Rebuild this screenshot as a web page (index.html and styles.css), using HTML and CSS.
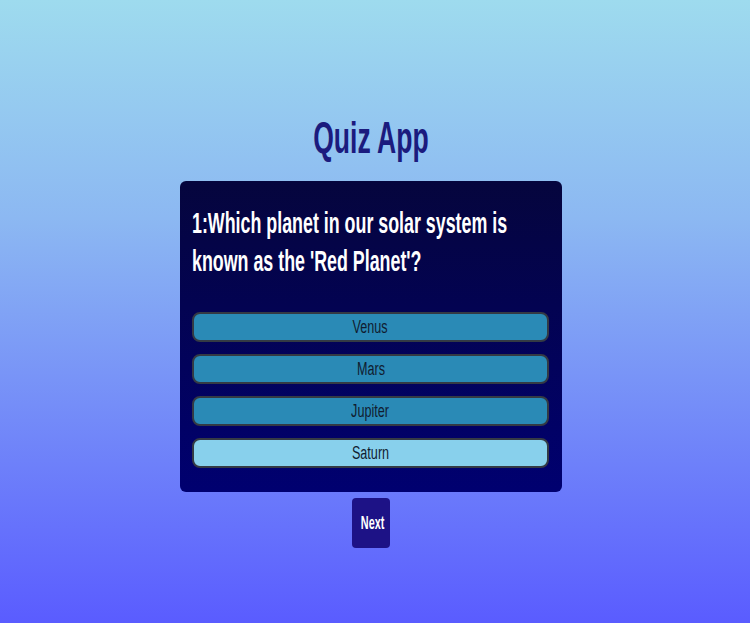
FILE: index.html
```html
<!DOCTYPE html>
<html>
<head>
<meta charset="utf-8">
<link rel="stylesheet" href="styles.css">
</head>
<body>
<main class="app">
  <h1 class="title"><span class="squeeze">Quiz App</span></h1>
  <section class="card">
    <div class="question-wrap">
      <h2 class="question">1:Which planet in our solar system is known as the 'Red Planet'?</h2>
    </div>
    <div class="answers">
      <button class="answer"><span class="squeeze">Venus</span></button>
      <button class="answer"><span class="squeeze">Mars</span></button>
      <button class="answer"><span class="squeeze">Jupiter</span></button>
      <button class="answer selected"><span class="squeeze">Saturn</span></button>
    </div>
  </section>
  <button class="next"><span class="squeeze">Next</span></button>
</main>
</body>
</html>
```
FILE: styles.css
```css
html, body {
  margin: 0;
  height: 100%;
}
body {
  background: linear-gradient(to bottom, #9edbee 0%, #8cb8f2 35%, #5a5cff 100%);
  font-family: "Liberation Sans", Arial, sans-serif;
}
.app {
  display: flex;
  flex-direction: column;
  align-items: center;
  padding-top: 110px;
  padding-right: 8px;
}
.squeeze {
  display: inline-block;
  transform-origin: center center;
}
.title {
  margin: 0;
  font-size: 45px;
  line-height: 56px;
  color: #1b1b7e;
  font-weight: bold;
}
.title .squeeze {
  transform: scaleX(0.59);
}
.card {
  margin-top: 15px;
  width: 357px;
  padding: 23px 13px 24px 12px;
  border-radius: 6px;
  background: linear-gradient(to bottom, #05053d 0%, #000070 100%);
}
.question-wrap {
  width: 357px;
  height: 76px;
}
.question {
  margin: 0;
  width: 580px;
  color: #ffffff;
  font-size: 29px;
  line-height: 38px;
  font-weight: bold;
  transform: scaleX(0.615);
  transform-origin: left top;
}
.answers {
  margin-top: 32px;
  display: flex;
  flex-direction: column;
  gap: 12px;
}
.answer {
  height: 30px;
  border: 2px solid #343a44;
  border-radius: 8px;
  background: #2a8ab6;
  color: #101c30;
  font-family: inherit;
  font-size: 18px;
  padding: 0;
  overflow: hidden;
}
.answer .squeeze {
  transform: scaleX(0.7);
}
.answer.selected {
  background: #88d0ec;
}
.next {
  margin-top: 6px;
  width: 38px;
  height: 50px;
  border: none;
  border-radius: 4px;
  background: #1d1286;
  color: #ffffff;
  font-family: inherit;
  font-weight: bold;
  font-size: 19px;
  padding: 0;
  overflow: hidden;
}
.next .squeeze {
  transform: scaleX(0.57);
}
```
